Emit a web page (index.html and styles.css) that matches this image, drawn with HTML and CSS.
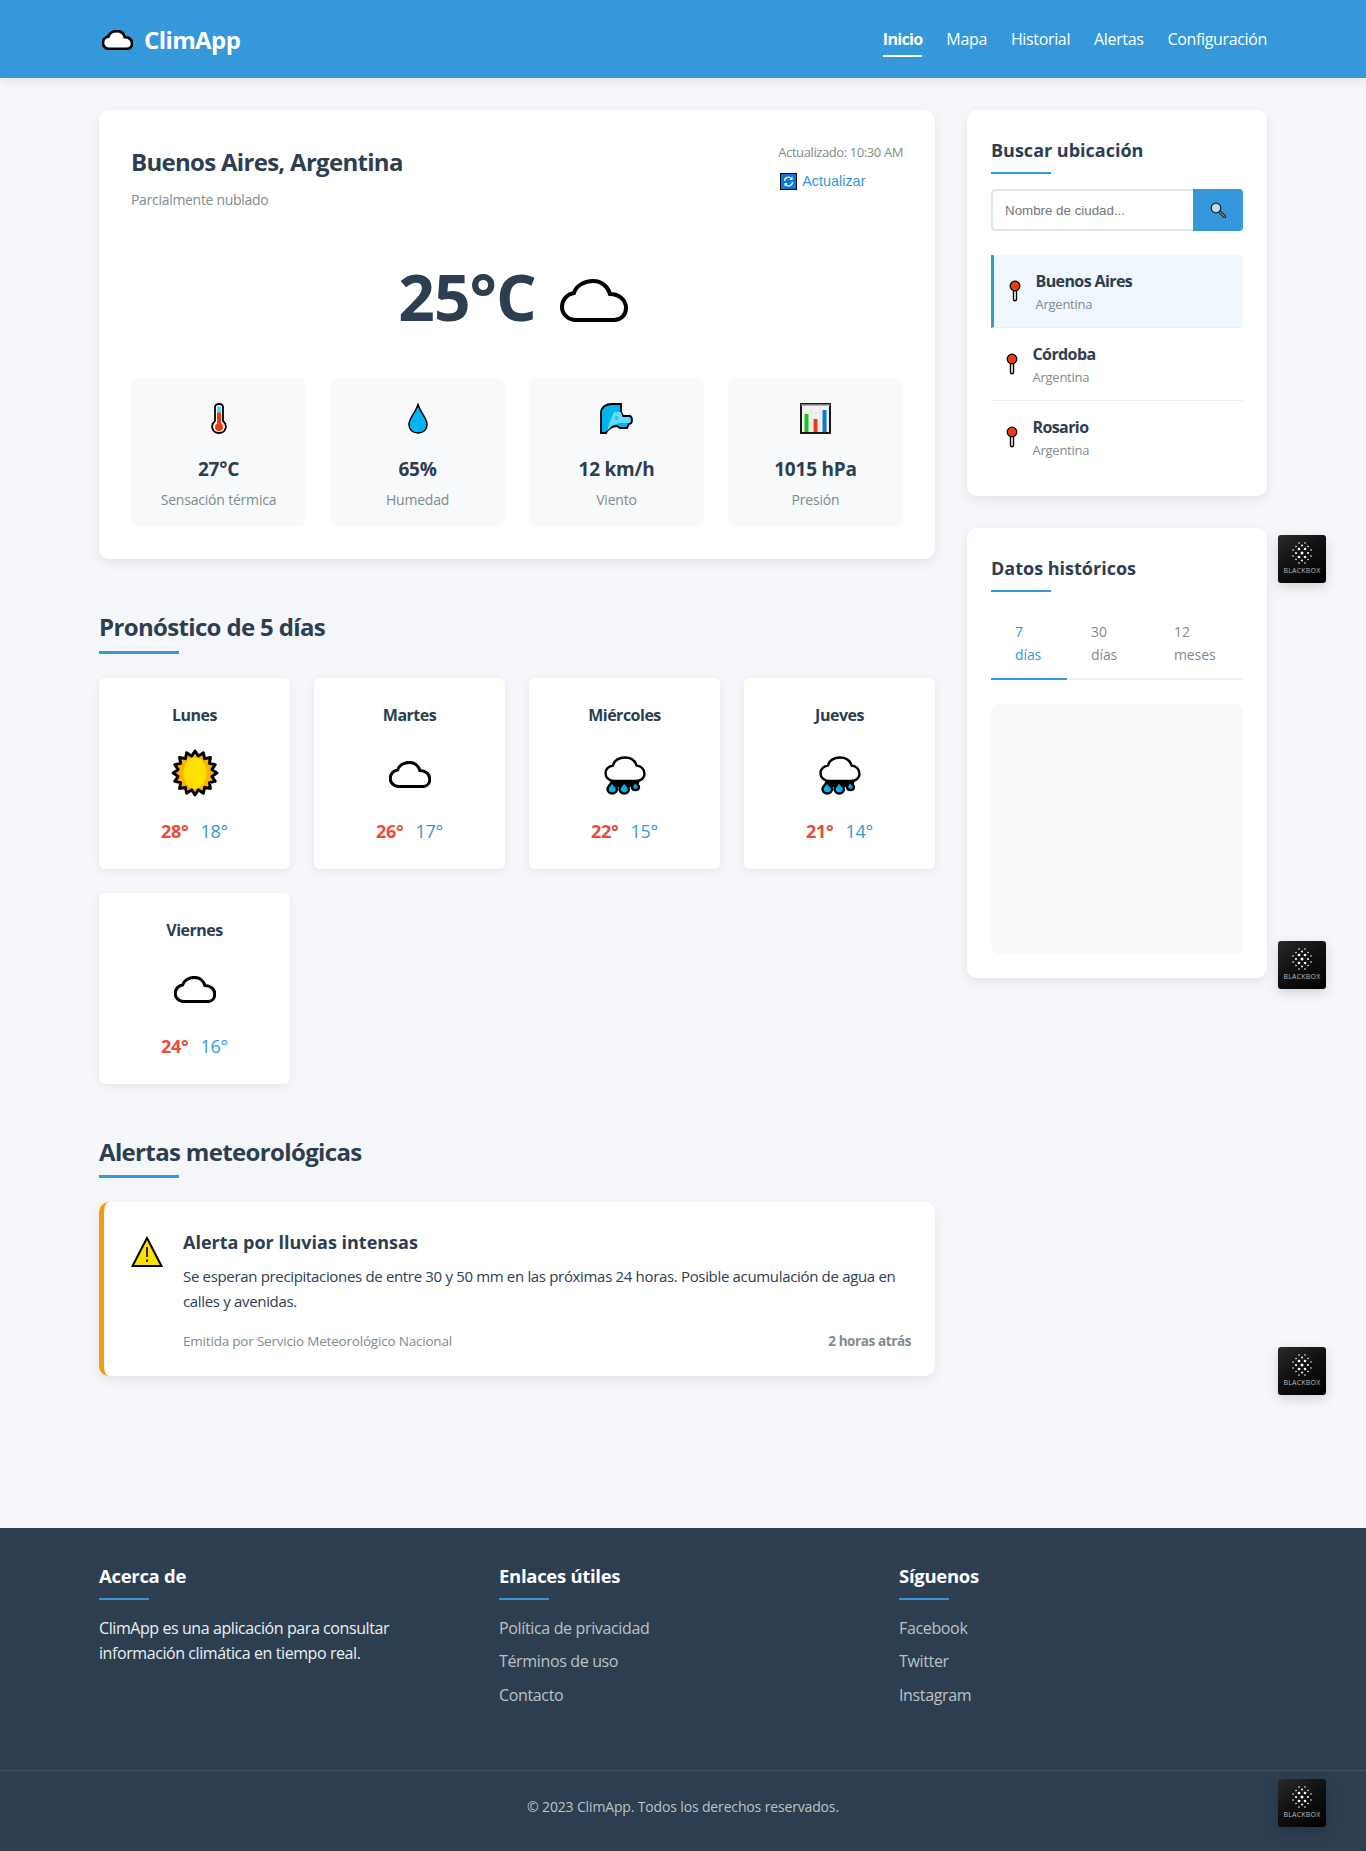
FILE: index.html
```html
<!DOCTYPE html>
<html lang="es">
<head>
    <meta charset="UTF-8">
    <meta name="viewport" content="width=device-width, initial-scale=1.0">
    <title>ClimApp</title>
    <link rel="stylesheet" href="styles.css">
</head>
<body>
    <svg class="sprites" aria-hidden="true">
        <defs>
            <symbol id="cloud" viewBox="0 0 68 43">
                <path d="M16 41 C8 41 2 35 2 28 C2 21 7 15 14 14 C16 7 24 2 33 2 C42 2 48 8 50 15 C59 15 66 21 66 29 C66 36 61 41 54 41 Z"/>
            </symbol>
            <symbol id="pin" viewBox="0 0 12 22">
                <path d="M4.500 10 V19 C4.500 21.400 7.500 21.400 7.500 19 V10 Z" fill="#fff" stroke="#000" stroke-width="1.400"/>
                <circle cx="6" cy="6" r="4.800" fill="#f03a0e" stroke="#000" stroke-width="1.300"/>
            </symbol>
            <symbol id="rain" viewBox="0 0 42 39">
                <path d="M6 24 H36 L34 31 H8 Z" fill="#000"/>
                <g fill="#00b4f0" stroke="#000" stroke-width="2.400">
                    <path d="M31 25 C30 28 28 29 28 31 C28 35 35 35 35 31 C35 29 32 28 31 25 Z"/>
                    <path d="M8 25 C7 29 3.500 30 3.500 33 C3.500 39 13 39 13 33 C13 30 9 29 8 25 Z"/>
                    <path d="M20 25 C19 29 15.500 30 15.500 33 C15.500 39 25 39 25 33 C25 30 21 29 20 25 Z"/>
                </g>
                <path d="M10 25 C5 25 1.500 21.500 1.500 17 C1.500 13 5 10 9 9.500 C10 4.500 15 1.500 21 1.500 C27 1.500 31 4.500 32.500 9.500 C37 10 40.500 13 40.500 18 C40.500 22 37 25 32 25 Z" fill="#fff" stroke="#000" stroke-width="2.400"/>
            </symbol>
            <symbol id="dots" viewBox="0 0 20 22">
                <g fill="#fff">
                    <circle cx="7" cy="1" r=".8"/><circle cx="13" cy="1" r=".8"/>
                    <circle cx="4" cy="4.500" r=".8"/><circle cx="10" cy="3.500" r="1"/><circle cx="16" cy="4.500" r=".8"/>
                    <circle cx="1" cy="8" r=".8"/><circle cx="7" cy="7" r="1.300"/><circle cx="13" cy="7" r="1.300"/><circle cx="19" cy="8" r=".8"/>
                    <circle cx="4" cy="11" r="1.100"/><circle cx="10" cy="11" r="1.500"/><circle cx="16" cy="11" r="1.100"/>
                    <circle cx="1" cy="14" r=".8"/><circle cx="7" cy="15" r="1.300"/><circle cx="13" cy="15" r="1.300"/><circle cx="19" cy="14" r=".8"/>
                    <circle cx="4" cy="17.500" r=".8"/><circle cx="10" cy="18.500" r="1"/><circle cx="16" cy="17.500" r=".8"/>
                    <circle cx="7" cy="21" r=".8"/><circle cx="13" cy="21" r=".8"/>
                </g>
            </symbol>
        </defs>
    </svg>

    <header class="site-header">
        <div class="container header-inner">
            <a class="logo" href="#">
                <svg class="logo-icon"><use href="#cloud"/></svg>
                <span>ClimApp</span>
            </a>
            <nav class="main-nav">
                <a class="active" href="#">Inicio</a>
                <a href="#">Mapa</a>
                <a href="#">Historial</a>
                <a href="#">Alertas</a>
                <a href="#">Configuración</a>
            </nav>
        </div>
    </header>

    <main class="container page-grid">
        <div class="main-col">
            <section class="current-card">
                <div class="current-head">
                    <div>
                        <h1>Buenos Aires, Argentina</h1>
                        <p class="condition">Parcialmente nublado</p>
                    </div>
                    <div class="updated">
                        <p>Actualizado: 10:30 AM</p>
                        <button class="refresh-btn" type="button">
                            <svg class="refresh-icon" viewBox="0 0 17 17">
                                <rect x=".5" y=".5" width="16" height="16" fill="#0a78dc" stroke="#000"/>
                                <path d="M4.500 8 A4 4 0 0 1 11.500 5.500 M12.500 9 A4 4 0 0 1 5.500 11.500" fill="none" stroke="#fff" stroke-width="1.300"/>
                                <path d="M12.500 3.500 V7 H9.500 Z M4.500 13.500 V10 H7.500 Z" fill="#fff"/>
                            </svg>
                            Actualizar
                        </button>
                    </div>
                </div>

                <div class="current-temp">
                    <span>25°C</span>
                    <svg class="temp-cloud"><use href="#cloud"/></svg>
                </div>

                <div class="stats">
                    <div class="stat">
                        <div class="stat-icon">
                            <svg width="16" height="31" viewBox="0 0 16 31">
                                <path d="M4 4 C4 0 12 0 12 4 V18 C17 22 15 30 8 30 C1 30 -1 22 4 18 Z" fill="#fff" stroke="#000" stroke-width="1.800"/>
                                <rect x="6" y="3.500" width="4" height="6" fill="#4fd2ff"/>
                                <rect x="6" y="9.500" width="4" height="11" fill="#f03a0e"/>
                                <circle cx="8" cy="24" r="4" fill="#f03a0e"/>
                            </svg>
                        </div>
                        <div class="stat-value">27°C</div>
                        <div class="stat-label">Sensación térmica</div>
                    </div>
                    <div class="stat">
                        <div class="stat-icon">
                            <svg width="20" height="31" viewBox="0 0 20 31">
                                <path d="M10 1.500 C8 9 1 15 1 21 C1 27 5 30 10 30 C15 30 19 27 19 21 C19 15 12 9 10 1.500 Z" fill="#00b4f0" stroke="#000" stroke-width="1.500"/>
                            </svg>
                        </div>
                        <div class="stat-value">65%</div>
                        <div class="stat-label">Humedad</div>
                    </div>
                    <div class="stat">
                        <div class="stat-icon">
                            <svg width="33" height="31" viewBox="0 0 33 31">
                                <path d="M1 30 V10 C1 4 6 1 12 1 H21 V9 L23 13 H29 C33 13 33 21 29 21 L27 25 H20 L17 23 C12 23 8 26 6 30 Z" fill="#00b4f0" stroke="#000" stroke-width="1.800"/>
                                <path d="M14 9 H21 L22.500 14 H29 C31 14 31 20 29 20 H20 L16 21 C12 22 9 25 7 29 C8 22 11 16 14 9 Z" fill="#5fdcff"/>
                                <path d="M15 14 H18 M15 16 H18" stroke="#2a7a9c" stroke-width=".7"/>
                            </svg>
                        </div>
                        <div class="stat-value">12 km/h</div>
                        <div class="stat-label">Viento</div>
                    </div>
                    <div class="stat">
                        <div class="stat-icon">
                            <svg width="31" height="31" viewBox="0 0 31 31">
                                <rect x="1" y="1" width="29" height="29" fill="#f2f2f2" stroke="#000" stroke-width="1.800"/>
                                <path d="M1 2 H30" stroke="#999" stroke-width="1.500"/>
                                <path d="M11 2 V29 M20 2 V29 M2 10 H29 M2 20 H29" stroke="#e4e4e4"/>
                                <rect x="4.500" y="11" width="4" height="18" fill="#1fbf1f"/>
                                <rect x="13.500" y="16" width="4" height="13" fill="#f03a0e"/>
                                <rect x="22.500" y="7" width="4" height="22" fill="#0a78dc"/>
                            </svg>
                        </div>
                        <div class="stat-value">1015 hPa</div>
                        <div class="stat-label">Presión</div>
                    </div>
                </div>
            </section>

            <h2 class="section-title">Pronóstico de 5 días</h2>
            <section class="forecast">
                <div class="day">
                    <div class="day-name">Lunes</div>
                    <div class="day-icon">
                        <svg width="48" height="48" viewBox="-23 -23 46 46">
                            <polygon points="21,0 16.180,3.220 19.400,8.040 13.720,9.170 14.850,14.850 9.170,13.720 8.040,19.400 3.220,16.180 0,21 -3.220,16.180 -8.040,19.400 -9.170,13.720 -14.850,14.850 -13.720,9.170 -19.400,8.040 -16.180,3.220 -21,0 -16.180,-3.220 -19.400,-8.040 -13.720,-9.170 -14.850,-14.850 -9.170,-13.720 -8.040,-19.400 -3.220,-16.180 0,-21 3.220,-16.180 8.040,-19.400 9.170,-13.720 14.850,-14.850 13.720,-9.170 19.400,-8.040 16.180,-3.220" fill="#ffb300" stroke="#000" stroke-width="2.800" stroke-linejoin="round"/>
                            <ellipse rx="11" ry="15" fill="#ffe000"/>
                        </svg>
                    </div>
                    <div class="day-temps"><span class="high">28°</span><span class="low">18°</span></div>
                </div>
                <div class="day">
                    <div class="day-name">Martes</div>
                    <div class="day-icon"><svg class="day-cloud"><use href="#cloud"/></svg></div>
                    <div class="day-temps"><span class="high">26°</span><span class="low">17°</span></div>
                </div>
                <div class="day">
                    <div class="day-name">Miércoles</div>
                    <div class="day-icon"><svg class="day-rain"><use href="#rain"/></svg></div>
                    <div class="day-temps"><span class="high">22°</span><span class="low">15°</span></div>
                </div>
                <div class="day">
                    <div class="day-name">Jueves</div>
                    <div class="day-icon"><svg class="day-rain"><use href="#rain"/></svg></div>
                    <div class="day-temps"><span class="high">21°</span><span class="low">14°</span></div>
                </div>
                <div class="day">
                    <div class="day-name">Viernes</div>
                    <div class="day-icon"><svg class="day-cloud"><use href="#cloud"/></svg></div>
                    <div class="day-temps"><span class="high">24°</span><span class="low">16°</span></div>
                </div>
            </section>

            <h2 class="section-title">Alertas meteorológicas</h2>
            <section class="alert">
                <svg class="alert-icon" width="32" height="32" viewBox="0 0 32 32">
                    <path d="M16 2 L30.500 30 H1.500 Z" fill="#ffe000" stroke="#000" stroke-width="2"/>
                    <path d="M16 11 V21 M16 23.500 V26" stroke="#000" stroke-width="1.600"/>
                </svg>
                <div class="alert-body">
                    <h3>Alerta por lluvias intensas</h3>
                    <p>Se esperan precipitaciones de entre 30 y 50 mm en las próximas 24 horas. Posible acumulación de agua en calles y avenidas.</p>
                    <div class="alert-meta">
                        <span>Emitida por Servicio Meteorológico Nacional</span>
                        <span class="alert-time">2 horas atrás</span>
                    </div>
                </div>
            </section>
        </div>

        <aside class="side-col">
            <section class="side-card">
                <h3 class="side-title">Buscar ubicación</h3>
                <form class="search">
                    <input type="text" placeholder="Nombre de ciudad...">
                    <button type="button">
                        <svg width="16" height="16" viewBox="0 0 16 16">
                            <path d="M9.500 9.500 L14.500 14.500" stroke="#000" stroke-width="3" stroke-linecap="round"/>
                            <path d="M9.500 9.500 L14.500 14.500" stroke="#8a8a8a" stroke-width="1.400" stroke-linecap="round"/>
                            <circle cx="6" cy="6" r="4.800" fill="#b8dcf5" stroke="#222" stroke-width="1.200"/>
                        </svg>
                    </button>
                </form>
                <ul class="locations">
                    <li class="location active">
                        <svg class="pin"><use href="#pin"/></svg>
                        <div><div class="loc-name">Buenos Aires</div><div class="loc-country">Argentina</div></div>
                    </li>
                    <li class="location">
                        <svg class="pin"><use href="#pin"/></svg>
                        <div><div class="loc-name">Córdoba</div><div class="loc-country">Argentina</div></div>
                    </li>
                    <li class="location">
                        <svg class="pin"><use href="#pin"/></svg>
                        <div><div class="loc-name">Rosario</div><div class="loc-country">Argentina</div></div>
                    </li>
                </ul>
            </section>

            <section class="side-card">
                <h3 class="side-title">Datos históricos</h3>
                <div class="tabs">
                    <button class="tab active" type="button">7 días</button>
                    <button class="tab" type="button">30 días</button>
                    <button class="tab" type="button">12 meses</button>
                </div>
                <div class="chart"></div>
            </section>
        </aside>
    </main>

    <footer class="site-footer">
        <div class="container footer-cols">
            <div>
                <h4>Acerca de</h4>
                <p>ClimApp es una aplicación para consultar información climática en tiempo real.</p>
            </div>
            <div>
                <h4>Enlaces útiles</h4>
                <a href="#">Política de privacidad</a>
                <a href="#">Términos de uso</a>
                <a href="#">Contacto</a>
            </div>
            <div>
                <h4>Síguenos</h4>
                <a href="#">Facebook</a>
                <a href="#">Twitter</a>
                <a href="#">Instagram</a>
            </div>
        </div>
        <div class="footer-bottom">© 2023 ClimApp. Todos los derechos reservados.</div>
    </footer>

    <div class="badge badge-1"><svg class="badge-dots"><use href="#dots"/></svg><span>BLACKBOX</span></div>
    <div class="badge badge-2"><svg class="badge-dots"><use href="#dots"/></svg><span>BLACKBOX</span></div>
    <div class="badge badge-3"><svg class="badge-dots"><use href="#dots"/></svg><span>BLACKBOX</span></div>
    <div class="badge badge-4"><svg class="badge-dots"><use href="#dots"/></svg><span>BLACKBOX</span></div>
</body>
</html>
```

FILE: styles.css
```css
* {
    box-sizing: border-box;
}
body {
    position: relative;
    margin: 0;
    font-family: "Open Sans", "Noto Sans", sans-serif;
    line-height: 1.6;
    color: #2c3e50;
    background-color: #f5f7fa;
}
h1, h2, h3, h4, p, ul {
    margin: 0;
    padding: 0;
}
a {
    text-decoration: none;
    color: inherit;
}
.sprites {
    position: absolute;
    width: 0;
    height: 0;
}
.container {
    width: 1200px;
    margin: 0 auto;
    padding: 0 16px;
}

/* header */
.site-header {
    height: 78px;
    background-color: #3498db;
    color: #fff;
    box-shadow: 0 2px 10px rgba(0,0,0,0.1);
}
.header-inner {
    height: 100%;
    display: flex;
    align-items: center;
    justify-content: space-between;
}
.logo {
    display: flex;
    align-items: center;
    gap: 11px;
    padding-top: 3px;
    font-size: 24px;
    font-weight: 700;
    letter-spacing: -0.6px;
}
.logo-icon {
    width: 31px;
    height: 20px;
    margin-left: 3px;
    fill: #fff;
    stroke: #000;
    stroke-width: 6;
}
.main-nav {
    display: flex;
    gap: 24px;
    font-size: 16px;
    letter-spacing: -0.35px;
}
.main-nav a {
    padding: 6px 0 2px;
    border-bottom: 2px solid transparent;
}
.main-nav a.active {
    font-weight: 700;
    letter-spacing: -0.7px;
    border-bottom-color: #fff;
}

/* layout */
.page-grid {
    display: grid;
    grid-template-columns: 1fr 300px;
    gap: 32px;
    padding-top: 32px;
    padding-bottom: 152px;
    align-items: start;
}

/* current weather */
.current-card {
    padding: 32px;
    background: #fff;
    border-radius: 10px;
    box-shadow: 0 4px 12px rgba(0,0,0,0.08);
}
.current-head {
    display: flex;
    justify-content: space-between;
    align-items: flex-start;
}
.current-head h1 {
    margin: 1px 0 8px;
    font-size: 24px;
    font-weight: 700;
    letter-spacing: -0.7px;
}
.condition {
    font-size: 14px;
    color: #7f8c8d;
    letter-spacing: -0.3px;
}
.updated {
    font-size: 13px;
    color: #7f8c8d;
    letter-spacing: -0.4px;
}
.refresh-btn {
    display: flex;
    align-items: center;
    gap: 5px;
    margin-top: 10px;
    padding: 0 0 0 2px;
    border: none;
    background: none;
    color: #3498db;
    font-family: "Liberation Sans", Arial, sans-serif;
    font-size: 14.400px;
    cursor: pointer;
}
.refresh-icon {
    width: 17px;
    height: 17px;
}
.current-temp {
    display: flex;
    align-items: center;
    justify-content: center;
    gap: 24px;
    margin: 47px 0 42.400px;
    font-size: 64px;
    font-weight: 700;
    line-height: 1.2;
    letter-spacing: -1px;
}
.temp-cloud {
    width: 68px;
    height: 43px;
    margin: 6px 8px 0 0;
    fill: none;
    stroke: #000;
    stroke-width: 4;
}
.stats {
    display: grid;
    grid-template-columns: repeat(4, 1fr);
    gap: 24px;
}
.stat {
    padding: 16px;
    text-align: center;
    background-color: #f8f9fa;
    border-radius: 8px;
}
.stat-icon {
    height: 50px;
    margin-bottom: 11px;
    display: flex;
    align-items: center;
    justify-content: center;
}
.stat-value {
    font-size: 19px;
    line-height: 28.800px;
    font-weight: 700;
    letter-spacing: -0.2px;
    margin-bottom: 5px;
}
.stat-label {
    font-size: 14px;
    color: #7f8c8d;
    letter-spacing: -0.2px;
}

/* section headings */
.section-title {
    position: relative;
    margin: 48px 0 24px;
    padding: 1px 0 7px;
    font-size: 24px;
    font-weight: 700;
    letter-spacing: -0.65px;
}
.section-title::after {
    content: "";
    position: absolute;
    left: 0;
    bottom: 0;
    width: 80px;
    height: 3px;
    background-color: #3498db;
}

/* forecast */
.forecast {
    display: grid;
    grid-template-columns: repeat(4, 1fr);
    gap: 24px;
}
.day {
    padding: 24px;
    text-align: center;
    background: #fff;
    border-radius: 6px;
    box-shadow: 0 2px 8px rgba(0,0,0,0.08);
}
.day-name {
    padding-top: 1px;
    margin-bottom: 15px;
    font-size: 16px;
    font-weight: 700;
    letter-spacing: -0.5px;
}
.day-icon {
    height: 60px;
    margin-bottom: 16px;
    display: flex;
    align-items: center;
    justify-content: center;
}
.day-cloud {
    width: 42px;
    height: 27px;
    margin-top: 2px;
    fill: #fff;
    stroke: #000;
    stroke-width: 5;
}
.day-rain {
    width: 42px;
    height: 39px;
    margin-top: 4px;
}
.day-temps {
    display: flex;
    justify-content: center;
    gap: 12px;
    font-size: 18px;
    line-height: 25.600px;
    letter-spacing: -0.3px;
}
.high {
    font-weight: 700;
    color: #e74c3c;
}
.low {
    color: #3498db;
}

/* alert */
.alert {
    display: flex;
    gap: 20px;
    padding: 24px 24px 23px 27px;
    background: #fff;
    border-left: 5px solid #f39c12;
    border-radius: 10px;
    box-shadow: 0 4px 12px rgba(0,0,0,0.08);
}
.alert-icon {
    flex-shrink: 0;
    margin-top: 10px;
}
.alert-body {
    flex: 1;
}
.alert-body h3 {
    padding-top: 2px;
    margin-bottom: 7px;
    font-size: 18px;
    font-weight: 700;
}
.alert-body p {
    margin-bottom: 17px;
    font-size: 15px;
    letter-spacing: -0.33px;
    line-height: 25px;
}
.alert-meta {
    display: flex;
    justify-content: space-between;
    font-size: 13.500px;
    color: #7f8c8d;
    letter-spacing: -0.2px;
}
.alert-time {
    font-weight: 700;
    letter-spacing: -0.4px;
}

/* sidebar */
.side-col {
    display: flex;
    flex-direction: column;
    gap: 32px;
}
.side-card {
    padding: 24px;
    background: #fff;
    border-radius: 10px;
    box-shadow: 0 4px 12px rgba(0,0,0,0.08);
}
.side-title {
    position: relative;
    padding-bottom: 8px;
    margin-bottom: 15px;
    font-size: 18px;
    line-height: 32px;
    font-weight: 700;
}
.side-title::after {
    content: "";
    position: absolute;
    left: 0;
    bottom: 0;
    width: 60px;
    height: 2px;
    background-color: #3498db;
}
.search {
    display: flex;
    height: 42px;
    margin-bottom: 24px;
}
.search input {
    flex: 1;
    min-width: 0;
    padding: 0 12px;
    border: 2px solid #e6e6e6;
    border-right: none;
    border-radius: 4px 0 0 4px;
    font-family: "Liberation Sans", Arial, sans-serif;
    font-size: 13.330px;
}
.search button {
    width: 50px;
    display: flex;
    align-items: center;
    justify-content: center;
    padding: 0;
    border: none;
    background-color: #3498db;
    border-radius: 0 4px 4px 0;
}
.locations {
    list-style: none;
    margin-bottom: -1px;
}
.location {
    display: flex;
    align-items: center;
    gap: 11.500px;
    padding: 12px;
    border-bottom: 1px solid #ecf0f1;
}
.location:last-child {
    border-bottom: none;
}
.location.active {
    background-color: #f0f7ff;
    border-left: 3px solid #3498db;
}
.pin {
    width: 18px;
    height: 22px;
    flex-shrink: 0;
}
.loc-name {
    padding-top: 2px;
    font-size: 16px;
    font-weight: 700;
    line-height: 25.600px;
    letter-spacing: -0.6px;
}
.loc-country {
    font-size: 13px;
    line-height: 19.400px;
    padding-bottom: 1px;
    color: #7f8c8d;
    letter-spacing: -0.25px;
}
.tabs {
    display: flex;
    padding-top: 1px;
    border-bottom: 2px solid #ecf0f1;
    margin-bottom: 24px;
}
.tab {
    padding: 11.500px 24px;
    margin-bottom: -2px;
    border: none;
    border-bottom: 2px solid transparent;
    background: none;
    font-family: inherit;
    font-size: 14px;
    line-height: 23.400px;
    color: #7f8c8d;
    text-align: left;
    letter-spacing: -0.1px;
}
.tab:nth-child(1) {
    width: 76px;
}
.tab:nth-child(2) {
    width: 83px;
}
.tab:nth-child(3) {
    width: 93px;
}
.tab.active {
    color: #3498db;
    border-bottom-color: #3498db;
}
.chart {
    height: 250px;
    background-color: #f8f9fa;
    border-radius: 8px;
}

/* footer */
.site-footer {
    background-color: #2c3e50;
    color: #ecf0f1;
    padding-top: 32px;
}
.footer-cols {
    display: grid;
    grid-template-columns: repeat(3, 1fr);
    gap: 32px;
    padding-bottom: 54px;
}
.footer-cols h4 {
    position: relative;
    margin-bottom: 16px;
    padding-bottom: 8px;
    font-size: 18.500px;
    line-height: 32px;
    font-weight: 700;
    color: #fff;
    letter-spacing: -0.3px;
}
.footer-cols h4::after {
    content: "";
    position: absolute;
    left: 0;
    bottom: 0;
    width: 50px;
    height: 2px;
    background-color: #3498db;
}
.footer-cols p {
    width: 300px;
    font-size: 16px;
    letter-spacing: -0.42px;
}
.footer-cols a {
    display: block;
    margin-bottom: 8px;
    color: #bdc3c7;
    font-size: 16px;
    letter-spacing: -0.35px;
}
.footer-bottom {
    padding: 25px 0 32px;
    border-top: 1px solid rgba(255,255,255,0.1);
    text-align: center;
    font-size: 14px;
    line-height: 22.400px;
    color: #bdc3c7;
    letter-spacing: -0.15px;
}

/* floating badges */
.badge {
    position: absolute;
    right: 40px;
    width: 48px;
    height: 48px;
    display: flex;
    flex-direction: column;
    align-items: center;
    padding-top: 7px;
    border-radius: 3px;
    background: linear-gradient(145deg, #2a2a2a 0%, #111 45%, #000 100%);
    box-shadow: 0 4px 12px rgba(0,0,0,0.15);
}
.badge span {
    font-size: 7px;
    line-height: 10px;
    color: #bbb;
    letter-spacing: 0.2px;
    margin-top: 2px;
}
.badge-dots {
    width: 20px;
    height: 22px;
}
.badge-1 {
    top: 535px;
}
.badge-2 {
    top: 941px;
}
.badge-3 {
    top: 1347px;
}
.badge-4 {
    top: 1779px;
}
```
